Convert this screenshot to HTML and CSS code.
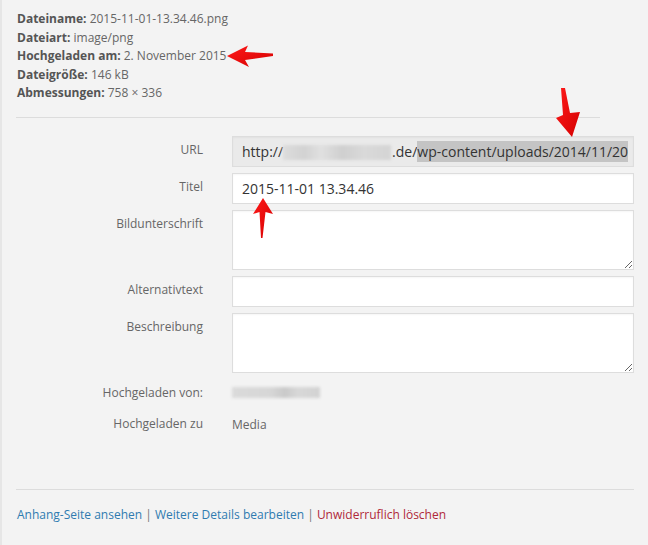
FILE: index.html
```html
<!DOCTYPE html>
<html lang="de">
<head>
<meta charset="utf-8">
<title>Anhang-Details</title>
<link rel="stylesheet" href="styles.css">
</head>
<body>
<div class="panel">
  <div class="info">
    <div><strong>Dateiname:</strong> 2015-11-01-13.34.46.png</div>
    <div><strong>Dateiart:</strong> image/png</div>
    <div><strong>Hochgeladen am:</strong> 2. November 2015</div>
    <div><strong>Dateigröße:</strong> 146 kB</div>
    <div><strong>Abmessungen:</strong> 758 × 336</div>
  </div>
  <div class="sep sep-top"></div>

  <div class="form">
    <div class="row">
      <span class="label">URL</span>
      <div class="field readonly">http://<span class="blur blur-url"></span>.de/<span class="sel">wp-content/uploads/2014/11/20</span></div>
    </div>
    <div class="row">
      <span class="label">Titel</span>
      <div class="field">2015-11-01 13.34.46</div>
    </div>
    <div class="row">
      <span class="label">Bildunterschrift</span>
      <textarea class="area"></textarea>
    </div>
    <div class="row">
      <span class="label">Alternativtext</span>
      <div class="field"></div>
    </div>
    <div class="row">
      <span class="label">Beschreibung</span>
      <textarea class="area"></textarea>
    </div>
    <div class="row static">
      <span class="label">Hochgeladen von:</span>
      <span class="value"><span class="blur blur-user"></span></span>
    </div>
    <div class="row static">
      <span class="label">Hochgeladen zu</span>
      <span class="value">Media</span>
    </div>
  </div>

  <div class="sep sep-bottom"></div>
  <div class="actions">
    <a class="link">Anhang-Seite ansehen</a> <span class="bar">|</span> <a class="link">Weitere Details bearbeiten</a> <span class="bar">|</span> <a class="link del">Unwiderruflich löschen</a>
  </div>

  <svg class="arrows" width="648" height="545" viewBox="0 0 648 545" aria-hidden="true">
    <defs>
      <linearGradient id="red" x1="0" y1="0" x2="1" y2="1">
        <stop offset="0" stop-color="#ff1a1a"/>
        <stop offset="1" stop-color="#d40000"/>
      </linearGradient>
    </defs>
    <polygon fill="url(#red)" points="227,56 248,45.5 245,52 273,53.5 273,56 245,60 249,67"/>
    <polygon fill="url(#red)" points="561,88 565,88 570,113 580,112 572,137 556,118 563,115"/>
    <polygon fill="url(#red)" points="263,198 273,214 265.5,212 262.5,238 261,238 259.5,212 253,214"/>
  </svg>
</div>
</body>
</html>
```

FILE: styles.css
```css
html, body {
  margin: 0;
  padding: 0;
  background: #f3f3f3;
}

body {
  font-family: "Open Sans", "Noto Sans", "Liberation Sans", sans-serif;
  font-size: 12px;
  color: #666;
}

.panel {
  position: relative;
  height: 545px;
  box-sizing: border-box;
  border-left: 2px solid #e6e6e6;
  overflow: hidden;
}

.info {
  padding: 10px 0 0 15px;
  line-height: 18.5px;
  font-size: 12px;
  color: #666;
}

.info strong {
  color: #555;
  font-weight: 700;
}

.sep {
  height: 1px;
  background: #dcdcdc;
}

.sep-top {
  margin: 14.5px 48px 0 14px;
}

.form {
  display: flex;
  flex-direction: column;
  gap: 6px;
  margin-top: 18px;
}

.row {
  display: grid;
  grid-template-columns: 201px 402px;
  column-gap: 29px;
  align-items: start;
}

.row.static {
  height: 25px;
}

.label {
  text-align: right;
  padding-top: 5px;
  line-height: 18px;
  color: #666;
  font-size: 12px;
}

.value {
  padding-top: 6px;
  line-height: 18px;
  color: #666;
  font-size: 12px;
}

.field {
  box-sizing: border-box;
  height: 31px;
  border: 1px solid #dddddd;
  background: #fff;
  padding: 0 9px;
  font-size: 14px;
  line-height: 29px;
  color: #333;
  white-space: nowrap;
  overflow: hidden;
  box-shadow: inset 0 1px 2px rgba(0, 0, 0, 0.04);
}

.field.readonly {
  background: #eaeaea;
  padding-right: 6px;
}

.sel {
  background: #c4c4c4;
  padding: 1px 0;
}

.area {
  box-sizing: border-box;
  height: 60px;
  width: 402px;
  margin: 0;
  border: 1px solid #dddddd;
  background: #fff;
  resize: vertical;
  box-shadow: inset 0 1px 2px rgba(0, 0, 0, 0.04);
  font-family: inherit;
}

.blur {
  display: inline-block;
  vertical-align: middle;
  filter: blur(1.5px);
}

.blur-url {
  width: 108px;
  height: 15px;
  margin: -2px 1px 0 0;
  background: linear-gradient(90deg, #dcdcdc 0%, #d2d2d2 20%, #e0e0e0 35%, #cfcfcf 55%, #d9d9d9 75%, #d4d4d4 100%);
}

.blur-user {
  width: 88px;
  height: 11px;
  margin-top: -4px;
  background: linear-gradient(90deg, #dadada 0%, #d6d6d6 45%, #c9c9c9 60%, #d8d8d8 75%, #d2d2d2 100%);
}

.sep-bottom {
  margin: 54px 14px 0 14px;
}

.actions {
  margin: 16px 0 0 15px;
  line-height: 18px;
  font-size: 12px;
}

.link {
  color: #2f7bb0;
  text-decoration: none;
}

.link.del {
  color: #b0283a;
}

.bar {
  color: #777;
}

.arrows {
  position: absolute;
  left: -2px;
  top: 0;
  pointer-events: none;
}
```
